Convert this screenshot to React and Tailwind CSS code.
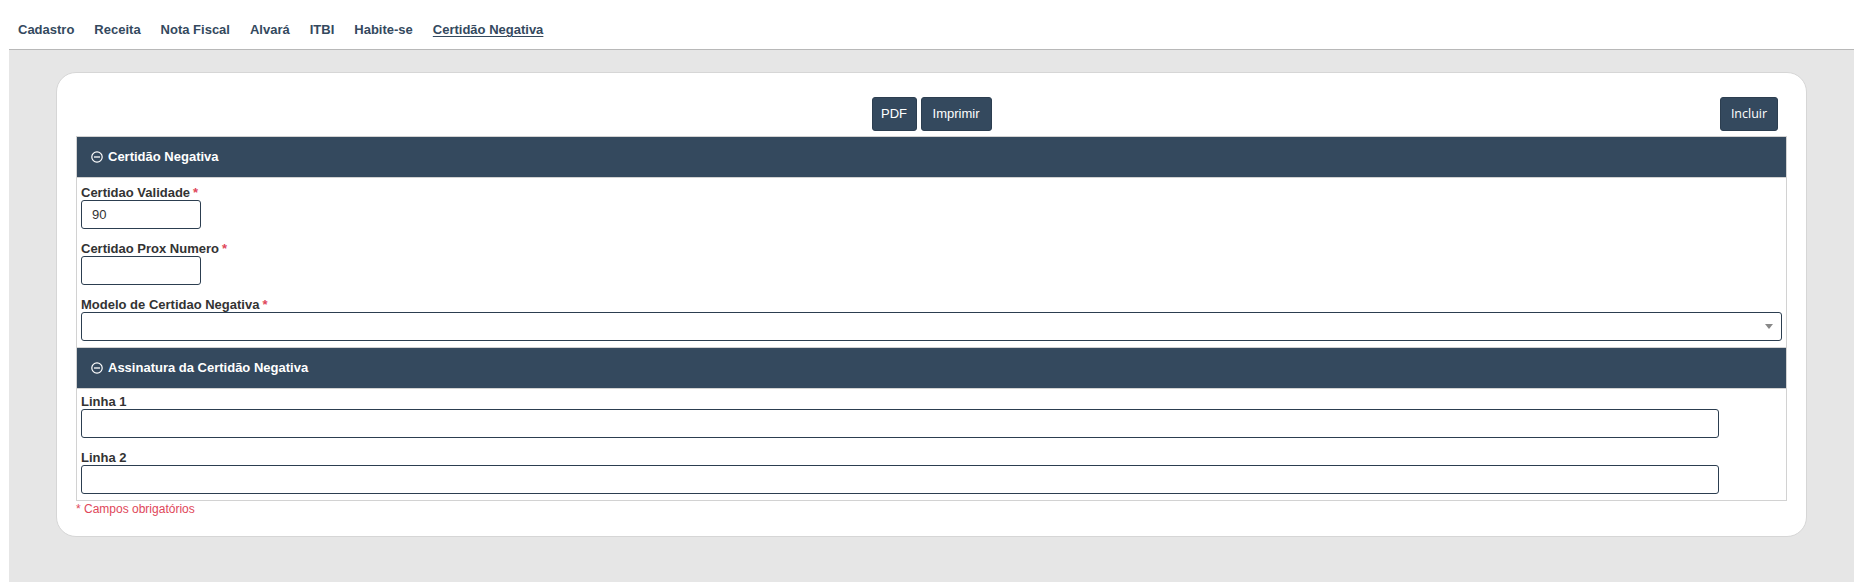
import { useState } from 'react'

const navItems = ['Cadastro', 'Receita', 'Nota Fiscal', 'Alvará', 'ITBI', 'Habite-se', 'Certidão Negativa']

function MinusCircle() {
  return (
    <svg width="12" height="12" viewBox="0 0 12 12" className="shrink-0">
      <circle cx="6" cy="6" r="5.2" fill="none" stroke="#fff" strokeWidth="1.2" />
      <line x1="3" y1="6" x2="9" y2="6" stroke="#fff" strokeWidth="1.3" />
    </svg>
  )
}

function SecaoHeader({ titulo }) {
  return (
    <div className="flex h-[42px] items-center gap-[5px] border-y border-[#d2d2d2] bg-[#34495e] pl-[14px] text-[13px] font-bold text-white">
      <MinusCircle />
      <span>{titulo}</span>
    </div>
  )
}

function Rotulo({ children, obrigatorio }) {
  return (
    <label className="block text-[13px] leading-[15px] font-bold text-[#333]">
      {children}
      {obrigatorio && <span className="ml-[3px] text-[#e0475a]">*</span>}
    </label>
  )
}

function Campo({ className, valor }) {
  return (
    <div className={`flex h-[29px] items-center rounded-[3px] border border-[#2c3e50] bg-white px-[10px] text-[13px] text-[#333] ${className}`}>
      {valor}
    </div>
  )
}

export default function App() {
  const [validade] = useState('90')

  return (
    <div className="min-h-[582px] bg-white font-['Liberation_Sans',Arial,sans-serif]">
      <nav className="flex h-[49px] items-center gap-[20px] pl-[18px] pt-[11px] text-[13px] font-bold text-[#34495e]">
        {navItems.map((item, i) => (
          <a key={item} className={i === navItems.length - 1 ? 'underline underline-offset-2' : ''}>
            {item}
          </a>
        ))}
      </nav>

      <div className="ml-[9px] mr-[12px] min-h-[533px] border-t border-[#b8b8b8] bg-[#e6e6e6] pt-[22px]">
        <div className="mx-[47px] rounded-[20px] border border-[#d6d6d6] bg-white px-[19px] pt-[24px] pb-[19px]">
          <div className="mb-[5px] grid h-[34px] grid-cols-[1fr_auto_1fr]">
            <div />
            <div className="flex gap-[4px] text-[13px] text-white">
              <button className="h-[34px] w-[45px] rounded-[3px] border border-[#2c3e50] bg-[#34495e]">PDF</button>
              <button className="h-[34px] w-[71px] rounded-[3px] border border-[#2c3e50] bg-[#34495e]">Imprimir</button>
            </div>
            <div className="flex justify-end pr-[9px]">
              <button className="h-[34px] w-[58px] rounded-[3px] border border-[#2c3e50] bg-[#34495e] font-['Open_Sans',sans-serif] text-[12.5px] text-white">
                Incluir
              </button>
            </div>
          </div>

          <div className="border-x border-b border-[#d2d2d2]">
            <SecaoHeader titulo="Certidão Negativa" />
            <div className="px-[4px] pt-[7px] pb-[6px]">
              <Rotulo obrigatorio>Certidao Validade</Rotulo>
              <Campo className="w-[120px]" valor={validade} />
              <div className="mt-[12px]">
                <Rotulo obrigatorio>Certidao Prox Numero</Rotulo>
                <Campo className="w-[120px]" />
              </div>
              <div className="mt-[12px]">
                <Rotulo obrigatorio>Modelo de Certidao Negativa</Rotulo>
                <div className="flex h-[29px] items-center justify-end rounded-[3px] border border-[#2c3e50] bg-white pr-[8px]">
                  <span className="h-0 w-0 border-x-[4px] border-t-[5px] border-x-transparent border-t-[#888]" />
                </div>
              </div>
            </div>

            <SecaoHeader titulo="Assinatura da Certidão Negativa" />
            <div className="px-[4px] pt-[5px] pb-[6px]">
              <Rotulo>Linha 1</Rotulo>
              <Campo className="w-[calc(100%-63px)]" />
              <div className="mt-[12px]">
                <Rotulo>Linha 2</Rotulo>
                <Campo className="w-[calc(100%-63px)]" />
              </div>
            </div>
          </div>

          <p className="mt-[1px] text-[12px] leading-[15px] text-[#e0475a]">* Campos obrigatórios</p>
        </div>
      </div>
    </div>
  )
}
